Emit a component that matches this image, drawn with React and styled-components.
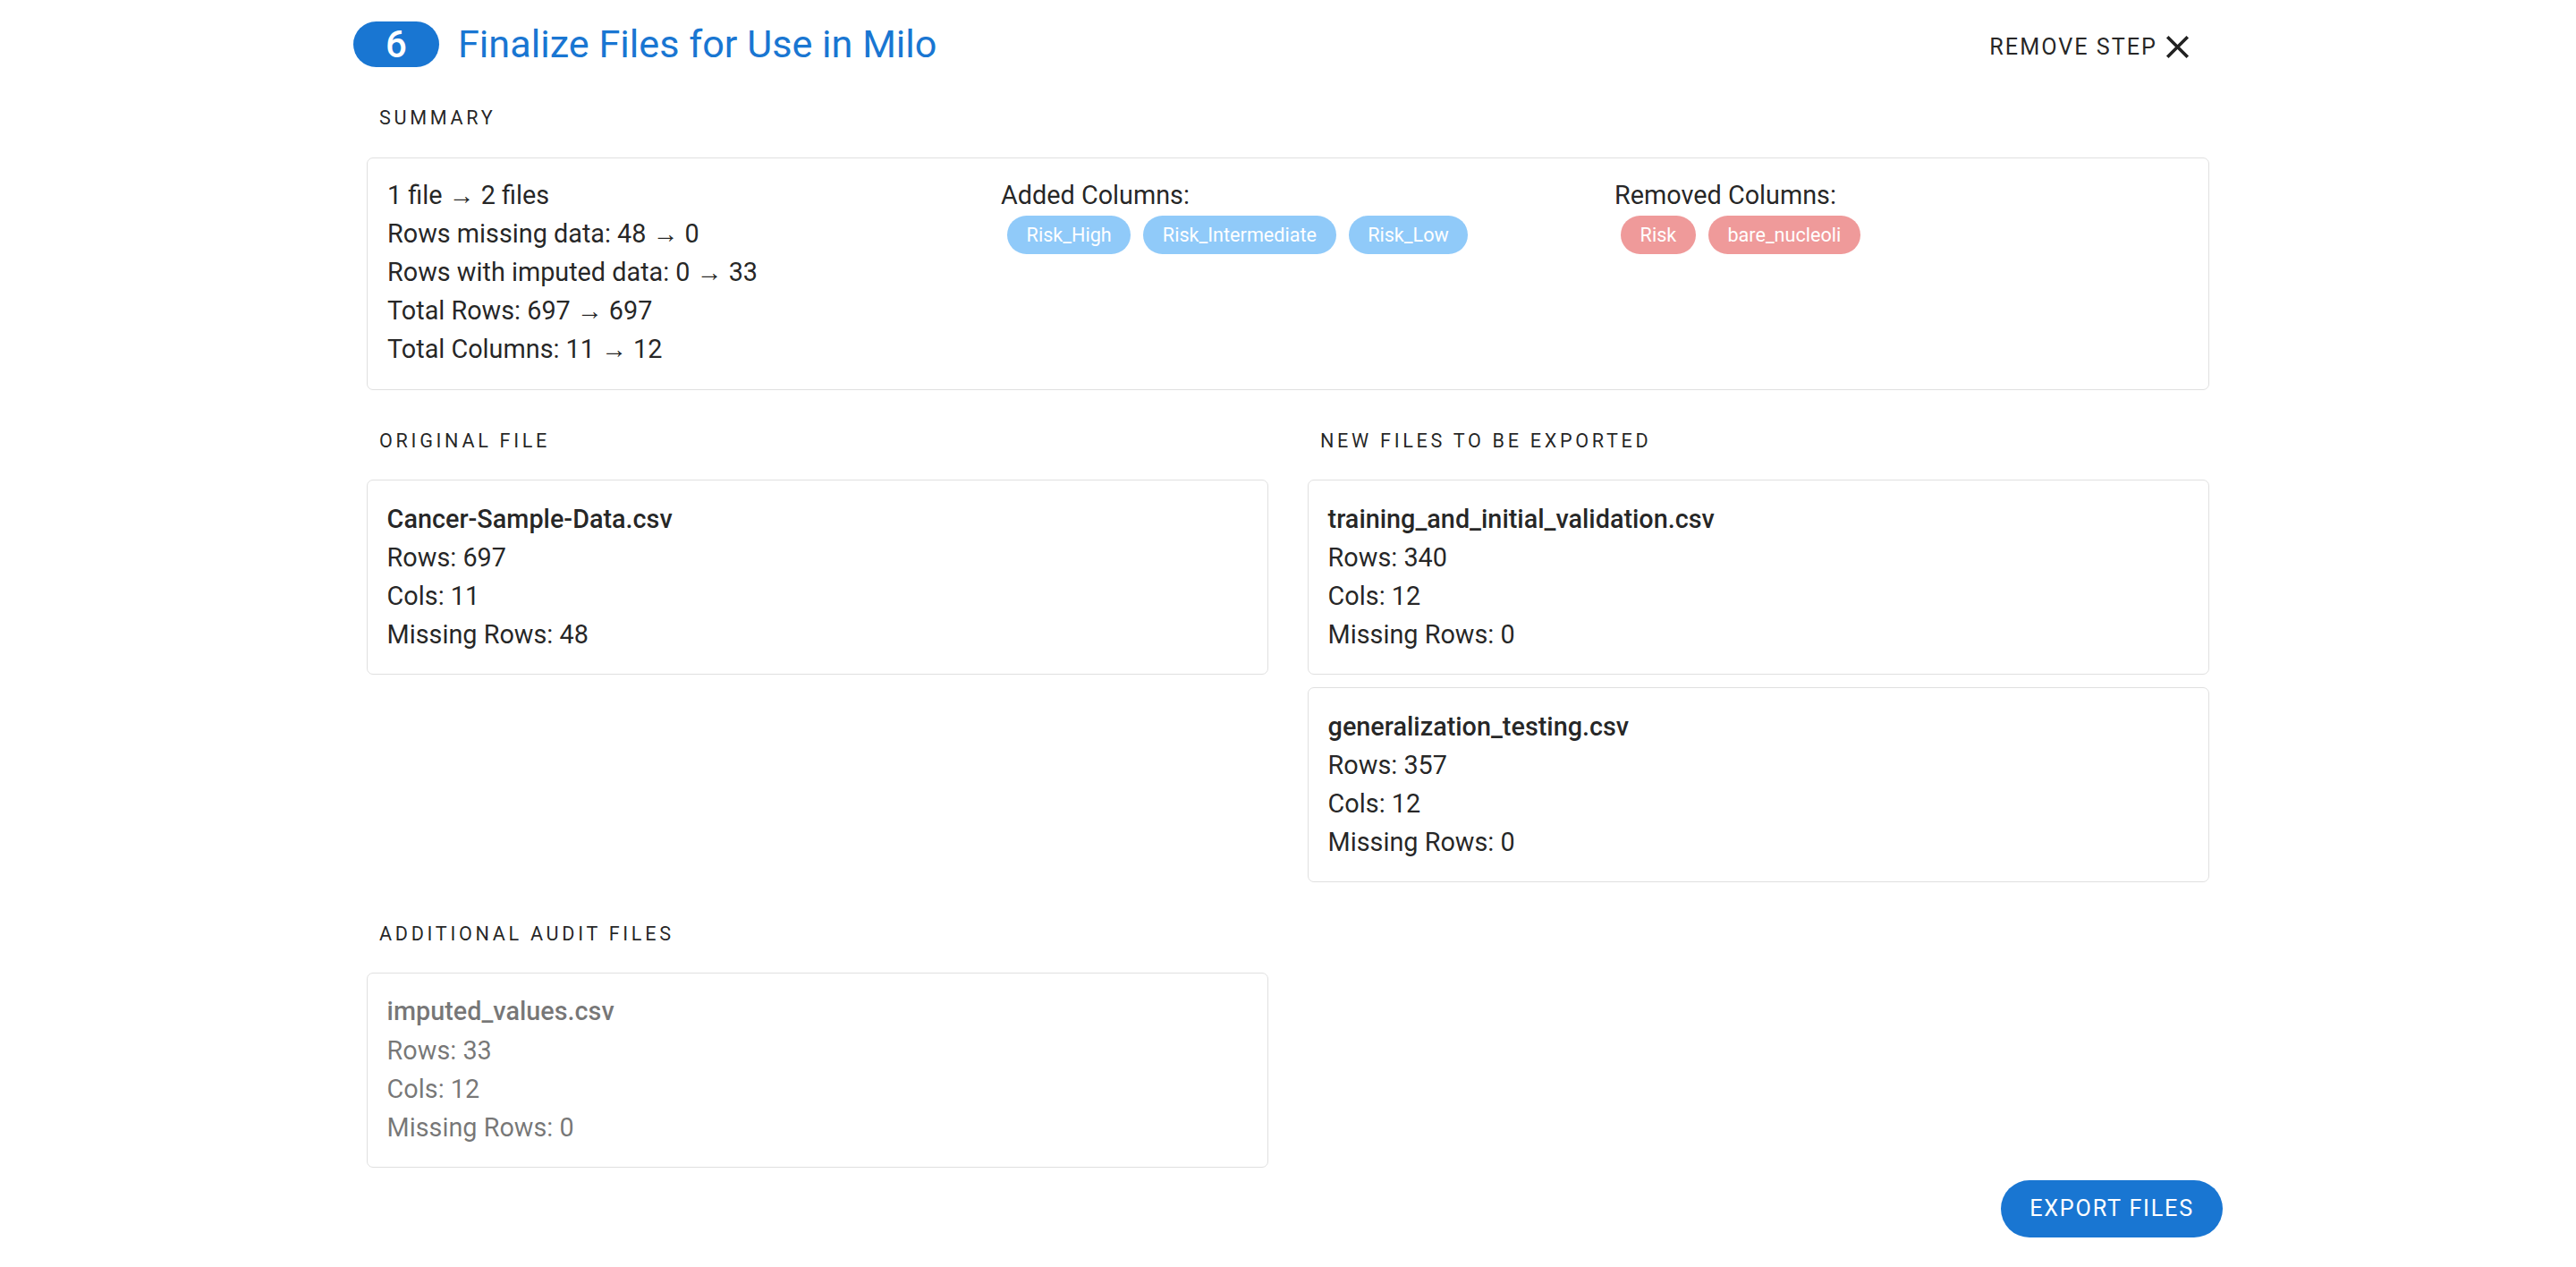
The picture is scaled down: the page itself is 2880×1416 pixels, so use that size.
import React from "react";
import styled, { createGlobalStyle } from "styled-components";

const GlobalStyle = createGlobalStyle`
  html, body { margin: 0; padding: 0; background: #fff; }
  body {
    font-family: Roboto, "Noto Sans", "Liberation Sans", sans-serif;
    color: rgba(0, 0, 0, 0.87);
  }
  * { box-sizing: border-box; }
`;

const Page = styled.div`
  width: 2090px;
  margin: 0 auto;
  padding-top: 24px;
  padding-bottom: 30px;
`;

const Header = styled.header`
  display: flex;
  align-items: center;
  justify-content: space-between;
  height: 51px;
`;

const TitleGroup = styled.div`
  display: flex;
  align-items: center;
  gap: 21px;
`;

const StepBadge = styled.div`
  width: 96px;
  height: 51px;
  border-radius: 26px;
  background: #1976d2;
  color: #fff;
  display: flex;
  align-items: center;
  justify-content: center;
  font-size: 42px;
  font-weight: 500;
  line-height: 1;
`;

const Title = styled.h1`
  margin: 0;
  font-size: 43.2px;
  font-weight: 400;
  color: #1976d2;
  line-height: 1.334;
`;

const RemoveButton = styled.button`
  display: flex;
  align-items: center;
  gap: 1px;
  background: none;
  border: 0;
  padding: 0;
  margin: 6px 29px 0 0;
  font-family: inherit;
  font-size: 25.2px;
  font-weight: 400;
  letter-spacing: 2px;
  text-transform: uppercase;
  color: rgba(0, 0, 0, 0.87);
  cursor: pointer;
  svg { display: block; }
`;

const Content = styled.main`
  padding: 0 15px;
`;

const Section = styled.section`
  margin-top: ${(p) => p.$mt}px;
`;

const SectionLabel = styled.div`
  font-size: 21.6px;
  line-height: 57.6px;
  letter-spacing: 3.7px;
  text-transform: uppercase;
  padding-left: 14px;
  margin-bottom: ${(p) => p.$mb}px;
  color: rgba(0, 0, 0, 0.87);
`;

const Card = styled.div`
  border: 1px solid #e0e0e0;
  border-radius: 7px;
  background: #fff;
`;

const SummaryCard = styled(Card)`
  display: grid;
  grid-template-columns: repeat(3, 1fr);
  padding: 20px 0 22px;
`;

const SummaryCol = styled.div`
  padding-left: 22px;
  font-size: 28.8px;
  line-height: 43.2px;
`;

const Line = styled.div``;

const ChipRow = styled.div`
  display: flex;
  flex-wrap: wrap;
  margin-top: 1px;
`;

const Chip = styled.span`
  display: inline-flex;
  align-items: center;
  height: 43.2px;
  padding: 0 21.6px;
  margin: 0 7px;
  border-radius: 21.6px;
  background: ${(p) => (p.$tone === "removed" ? "#ef9a9a" : "#90caf9")};
  color: #fff;
  font-size: 21.6px;
  line-height: 1;
`;

const TwoCol = styled.div`
  display: grid;
  grid-template-columns: 1fr 1fr;
  column-gap: 44px;
  margin-top: ${(p) => p.$mt}px;
  align-items: start;
`;

const CardStack = styled.div`
  display: flex;
  flex-direction: column;
  gap: 14px;
`;

const FileCard = styled(Card)`
  padding: 21.6px;
  font-size: 28.8px;
  line-height: 43.2px;
  color: ${(p) => (p.$muted ? "rgba(0,0,0,0.54)" : "rgba(0,0,0,0.87)")};
`;

const FileName = styled.div`
  font-weight: 500;
`;

const Footer = styled.div`
  display: flex;
  justify-content: flex-end;
  margin-top: 14px;
`;

const ExportButton = styled.button`
  height: 64px;
  padding: 0 32px;
  border: 0;
  border-radius: 32px;
  background: #1976d2;
  color: #fff;
  font-family: inherit;
  font-size: 25.2px;
  font-weight: 400;
  letter-spacing: 1.8px;
  text-transform: uppercase;
  cursor: pointer;
`;

const CloseIcon = () => (
  <svg width="43" height="43" viewBox="0 0 24 24" fill="rgba(0,0,0,0.87)">
    <path d="M19 6.41 17.59 5 12 10.59 6.41 5 5 6.41 10.59 12 5 17.59 6.41 19 12 13.41 17.59 19 19 17.59 13.41 12z" />
  </svg>
);

const FileInfo = ({ name, rows, cols, missing, muted }) => (
  <FileCard $muted={muted}>
    <FileName>{name}</FileName>
    <Line>Rows: {rows}</Line>
    <Line>Cols: {cols}</Line>
    <Line>Missing Rows: {missing}</Line>
  </FileCard>
);

export default function App() {
  return (
    <>
      <GlobalStyle />
      <Page>
        <Header>
          <TitleGroup>
            <StepBadge>6</StepBadge>
            <Title>Finalize Files for Use in Milo</Title>
          </TitleGroup>
          <RemoveButton>
            Remove Step
            <CloseIcon />
          </RemoveButton>
        </Header>

        <Content>
          <Section $mt={28}>
            <SectionLabel $mb={15}>Summary</SectionLabel>
            <SummaryCard>
              <SummaryCol>
                <Line>1 file → 2 files</Line>
                <Line>Rows missing data: 48 → 0</Line>
                <Line>Rows with imputed data: 0 → 33</Line>
                <Line>Total Rows: 697 → 697</Line>
                <Line>Total Columns: 11 → 12</Line>
              </SummaryCol>
              <SummaryCol>
                <Line>Added Columns:</Line>
                <ChipRow>
                  <Chip>Risk_High</Chip>
                  <Chip>Risk_Intermediate</Chip>
                  <Chip>Risk_Low</Chip>
                </ChipRow>
              </SummaryCol>
              <SummaryCol>
                <Line>Removed Columns:</Line>
                <ChipRow>
                  <Chip $tone="removed">Risk</Chip>
                  <Chip $tone="removed">bare_nucleoli</Chip>
                </ChipRow>
              </SummaryCol>
            </SummaryCard>
          </Section>

          <TwoCol $mt={28}>
            <Section $mt={0}>
              <SectionLabel $mb={15}>Original File</SectionLabel>
              <FileInfo name="Cancer-Sample-Data.csv" rows={697} cols={11} missing={48} />
            </Section>
            <Section $mt={0}>
              <SectionLabel $mb={15}>New Files to be Exported</SectionLabel>
              <CardStack>
                <FileInfo name="training_and_initial_validation.csv" rows={340} cols={12} missing={0} />
                <FileInfo name="generalization_testing.csv" rows={357} cols={12} missing={0} />
              </CardStack>
            </Section>
          </TwoCol>

          <TwoCol $mt={29}>
            <Section $mt={0}>
              <SectionLabel $mb={14}>Additional Audit Files</SectionLabel>
              <FileInfo name="imputed_values.csv" rows={33} cols={12} missing={0} muted />
            </Section>
          </TwoCol>
        </Content>

        <Footer>
          <ExportButton>Export Files</ExportButton>
        </Footer>
      </Page>
    </>
  );
}
